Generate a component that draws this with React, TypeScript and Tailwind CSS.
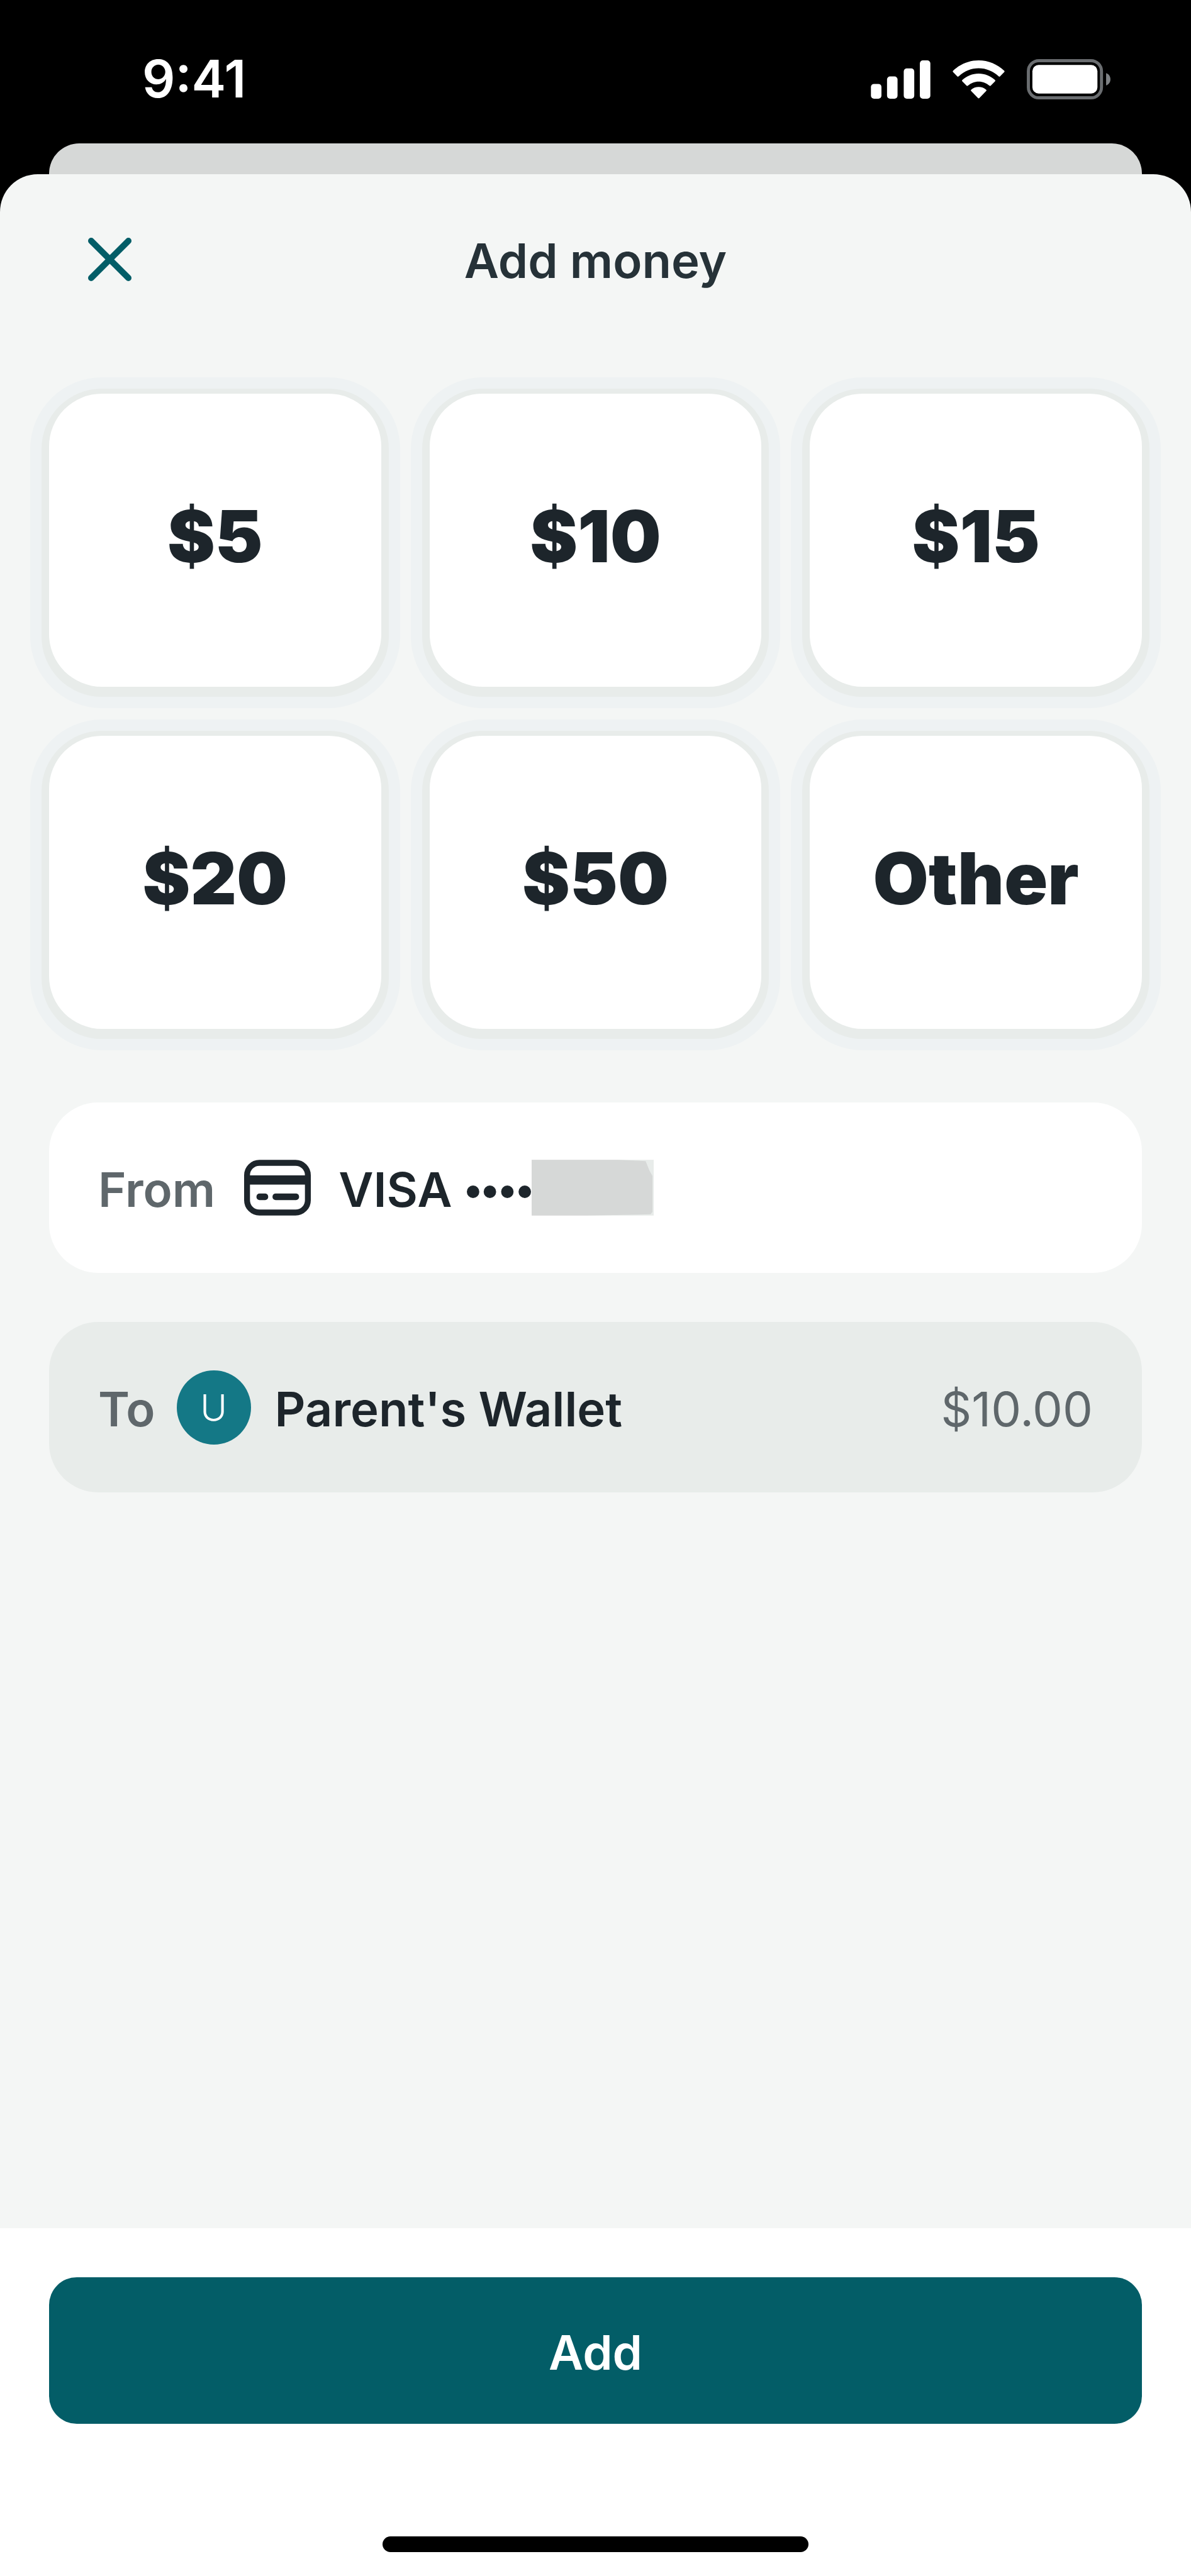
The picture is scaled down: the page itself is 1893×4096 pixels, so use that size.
import React from 'react';

const amounts = ['$5', '$10', '$15', '$20', '$50', 'Other'];

function SignalIcon() {
  return (
    <svg viewBox="0 0 96 62" className="h-[61px] w-[95px]" fill="currentColor" aria-hidden="true">
      <rect x="0" y="38" width="17" height="24" rx="5" />
      <rect x="26" y="26" width="17" height="36" rx="5" />
      <rect x="53" y="13" width="17" height="49" rx="5" />
      <rect x="79" y="0" width="17" height="62" rx="5" />
    </svg>
  );
}

function WifiIcon() {
  return (
    <svg viewBox="0 0 84 62" className="h-[61px] w-[83px]" fill="currentColor" aria-hidden="true">
      <path d="M42 0C57.5 0 72 6 83.3 16.8Q84.3 17.8 83.4 18.8L76.5 26Q75.500 26.9 74.5 26C65.5 17.5 54 12.7 42 12.7S18.5 17.5 9.5 26Q8.5 26.9 7.5 26L.6 18.8Q-.3 17.8 .7 16.8C12 6 26.5 0 42 0Z" />
      <path d="M42 21.3C52 21.3 61.3 25.1 68.5 31.8Q69.5 32.8 68.5 33.8L61.5 41Q60.5 41.9 59.5 41C54.7 36.6 48.5 34.2 42 34.2S29.3 36.6 24.5 41Q23.5 41.9 22.5 41L15.5 33.8Q14.5 32.8 15.5 31.8C22.7 25.1 32 21.3 42 21.3Z" />
      <path d="M42 43C46.5 43 50.8 44.5 54.2 47.4Q55.3 48.4 54.3 49.4L43 61Q42 62 41 61L29.7 49.4Q28.7 48.4 29.8 47.4C33.2 44.5 37.5 43 42 43Z" />
    </svg>
  );
}

function BatteryIcon() {
  return (
    <svg viewBox="0 0 136 65" className="h-[64px] w-[134px]" aria-hidden="true">
      <rect x="2.5" y="2.5" width="118" height="60" rx="17" fill="none" stroke="#6a6d70" strokeWidth="5" />
      <rect x="9" y="9.5" width="105" height="46" rx="10" fill="#fff" />
      <path d="M128 22.5C132.5 24 135 28 135 32.5S132.5 41 128 42.5Z" fill="#7f8285" />
    </svg>
  );
}

function CardIcon() {
  return (
    <svg viewBox="0 0 108 90" className="h-[89px] w-[106px]" aria-hidden="true">
      <rect x="4.75" y="4.75" width="98.5" height="80.5" rx="20" fill="none" stroke="#1d252b" strokeWidth="9.5" />
      <rect x="5" y="25" width="98" height="15" fill="#1d252b" />
      <rect x="20" y="54.5" width="19" height="10.5" rx="5" fill="#1d252b" />
      <rect x="46" y="54.5" width="43" height="10.5" rx="5" fill="#1d252b" />
    </svg>
  );
}

function StatusBar() {
  return (
    <div className="flex h-[228px] items-center justify-between pt-6 pr-[127px] pl-[226px] text-white">
      <span className="text-[82px] leading-none font-semibold">9:41</span>
      <div className="flex items-center gap-[35px]">
        <SignalIcon />
        <WifiIcon />
        <BatteryIcon />
      </div>
    </div>
  );
}

export default function App() {
  const [selected, setSelected] = React.useState<string | null>(null);

  return (
    <div className="flex min-h-screen flex-col bg-black font-[Inter,'Liberation_Sans',sans-serif] text-[#1d252b]">
      <StatusBar />

      {/* edge of the screen underneath the sheet */}
      <div className="mx-[78px] h-[49px] rounded-t-[48px] bg-[#d6d8d7]" />

      <main className="flex flex-1 flex-col overflow-hidden rounded-t-[60px] bg-[#f4f6f5]">
        <header className="grid h-[270px] grid-cols-[1fr_auto_1fr] items-center px-[140px]">
          <button type="button" aria-label="Close" className="justify-self-start text-[#035d67]">
            <svg viewBox="0 0 70 72" className="h-[71px] w-[69px]" fill="none" stroke="currentColor" strokeWidth="10" strokeLinecap="round">
              <path d="M5 6L65 66M65 6L5 66" />
            </svg>
          </button>
          <h1 className="pt-1 text-[76px] leading-none font-semibold text-[#263238]">Add money</h1>
        </header>

        <div className="grid grid-cols-3 gap-x-[77px] gap-y-[78px] px-[78px] pt-[79px]">
          {amounts.map((amount) => (
            <button
              key={amount}
              type="button"
              aria-pressed={selected === amount}
              onClick={() => setSelected(amount)}
              className="h-[466px] rounded-[84px] bg-white pb-3 text-[114px] leading-none font-black shadow-[0_4px_0_12px_#e8ecea,0_4px_0_30px_#eef2f3]"
            >
              {amount}
            </button>
          ))}
        </div>

        <div className="flex flex-col gap-[78px] px-[78px] pt-[117px] text-[76px] leading-none font-semibold">
          <button type="button" className="flex h-[271px] items-center rounded-[78px] bg-white px-[78px]">
            <span className="pt-1 text-[#5f676b]">From</span>
            <span className="ml-[46px]">
              <CardIcon />
            </span>
            <span className="ml-[44px] pt-1">VISA</span>
            <svg viewBox="0 0 104 20" className="mt-3 ml-[24px] h-[20px] w-[103px]" fill="currentColor" aria-hidden="true">
              <circle cx="10" cy="10" r="10" />
              <circle cx="37" cy="10" r="10" />
              <circle cx="65" cy="10" r="10" />
              <circle cx="93" cy="10" r="10" />
            </svg>
            <svg viewBox="0 0 197 90" className="h-[89px] w-[194px]" aria-hidden="true">
              <rect width="197" height="90" fill="#e8ecea" />
              <path d="M0 0H140L184 2L190 17L195 26V84L192 88L90 90H0Z" fill="#d6d8d7" />
            </svg>
          </button>

          <div className="flex h-[271px] items-center rounded-[78px] bg-[#e8ecea] px-[78px]">
            <span className="pt-1 text-[#5f676b]">To</span>
            <span className="ml-[34px] flex size-[118px] items-center justify-center rounded-full bg-[#147886] text-[58px] font-light text-white">
              U
            </span>
            <span className="ml-[38px] pt-1">Parent's Wallet</span>
            <span className="ml-auto pt-1 font-normal text-[#5f676b]">$10.00</span>
          </div>
        </div>

        <footer className="mt-auto flex flex-col items-center bg-white px-[78px] pt-[78px] pb-[38px]">
          <button type="button" className="h-[233px] w-full rounded-[44px] bg-[#035d67] pt-1 text-[76px] leading-none font-semibold text-white">
            Add
          </button>
          <div className="mt-[179px] h-[25px] w-[39%] rounded-full bg-black" />
        </footer>
      </main>
    </div>
  );
}
